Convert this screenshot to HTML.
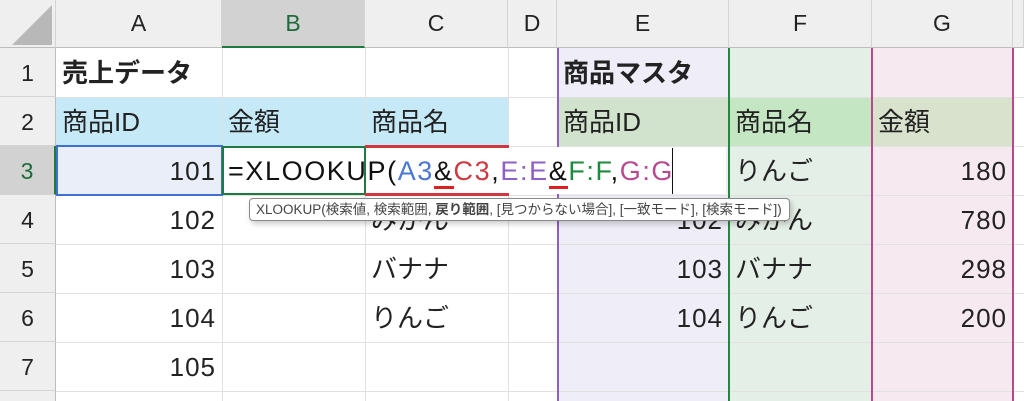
<!DOCTYPE html>
<html><head><meta charset="utf-8"><style>
html,body{margin:0;width:1024px;height:401px;overflow:hidden}
body{background:#fff;font-family:"Liberation Sans","Noto Sans CJK JP",sans-serif;position:relative}
div{position:absolute;box-sizing:border-box}
.h{background:#efefef;color:#222;font-size:23px;text-align:center;line-height:46px;top:0;height:48px;border-right:1px solid #d4d4d4;border-bottom:1px solid #bdbdbd}
.r{background:#efefef;color:#222;font-size:23px;text-align:center;left:0;width:56px;height:49px;line-height:50px;border-bottom:1px solid #d4d4d4;border-right:1px solid #bdbdbd}
.c{font-size:26px;line-height:50px;color:#222;white-space:nowrap;padding:0 6px}
.n{text-align:right;letter-spacing:1px}
.vl{top:48px;height:353px;width:1px;background:#e1e1e1}
.hl{left:56px;width:968px;height:1px;background:#e1e1e1}
</style></head><body>
<div style="left:557px;top:48px;width:172px;height:353px;background:#efedf7"></div>
<div style="left:729px;top:48px;width:143px;height:353px;background:#e4efe7"></div>
<div style="left:872px;top:48px;width:141px;height:353px;background:#f6e9ef"></div>
<div style="left:56px;top:97px;width:452px;height:49px;background:#c6e9f8"></div>
<div style="left:557px;top:97px;width:172px;height:49px;background:#d2e3cd"></div>
<div style="left:729px;top:97px;width:143px;height:49px;background:#c5e6c2"></div>
<div style="left:872px;top:97px;width:141px;height:49px;background:#d9e2cc"></div>
<div style="left:56px;top:146px;width:166px;height:49px;background:#e9eef8"></div>
<div class="vl" style="left:222px"></div><div class="vl" style="left:365px"></div><div class="vl" style="left:508px"></div>
<div class="hl" style="top:97px"></div><div class="hl" style="top:146px"></div><div class="hl" style="top:195px"></div><div class="hl" style="top:244px"></div><div class="hl" style="top:293px"></div><div class="hl" style="top:342px"></div><div class="hl" style="top:391px"></div>
<div class="h" style="left:0;width:56px"><div style="left:12px;top:5px;width:0;height:0;border-left:40px solid transparent;border-bottom:40px solid #b8b8b8"></div></div>
<div class="h" style="left:56px;width:166px">A</div>
<div class="h" style="left:222px;width:143px;background:#d2d2d2;color:#1e6b3a;border-bottom:2px solid #1e7a3e">B</div>
<div class="h" style="left:365px;width:143px">C</div>
<div class="h" style="left:508px;width:49px">D</div>
<div class="h" style="left:557px;width:172px">E</div>
<div class="h" style="left:729px;width:143px">F</div>
<div class="h" style="left:872px;width:141px">G</div>
<div class="h" style="left:1013px;width:11px"></div>
<div class="r" style="top:48px">1</div><div class="r" style="top:97px">2</div>
<div class="r" style="top:146px;background:#d2d2d2;color:#1e6b3a;border-right:2px solid #1e7a3e">3</div>
<div class="r" style="top:195px">4</div><div class="r" style="top:244px">5</div><div class="r" style="top:293px">6</div><div class="r" style="top:342px">7</div><div class="r" style="top:391px;height:10px;border-bottom:none"></div>
<div style="left:557px;top:48px;width:2px;height:353px;background:#8e5fc4"></div>
<div style="left:728px;top:48px;width:2px;height:353px;background:#1e8a3e"></div>
<div style="left:871px;top:48px;width:2px;height:353px;background:#b9488f"></div>
<div style="left:1012px;top:48px;width:2px;height:353px;background:#b9488f"></div>
<div class="c" style="left:56px;top:48px;font-weight:bold">売上データ</div>
<div class="c" style="left:557px;top:48px;font-weight:bold">商品マスタ</div>
<div class="c" style="left:56px;top:97px">商品ID</div>
<div class="c" style="left:222px;top:97px">金額</div>
<div class="c" style="left:365px;top:97px">商品名</div>
<div class="c" style="left:557px;top:97px">商品ID</div>
<div class="c" style="left:729px;top:97px">商品名</div>
<div class="c" style="left:872px;top:97px">金額</div>
<div class="c n" style="left:56px;top:146px;width:166px">101</div>
<div class="c n" style="left:56px;top:195px;width:166px">102</div>
<div class="c n" style="left:56px;top:244px;width:166px">103</div>
<div class="c n" style="left:56px;top:293px;width:166px">104</div>
<div class="c n" style="left:56px;top:342px;width:166px">105</div>
<div class="c" style="left:365px;top:195px">みかん</div>
<div class="c" style="left:365px;top:244px">バナナ</div>
<div class="c" style="left:365px;top:293px">りんご</div>
<div class="c n" style="left:557px;top:195px;width:172px">102</div>
<div class="c n" style="left:557px;top:244px;width:172px">103</div>
<div class="c n" style="left:557px;top:293px;width:172px">104</div>
<div class="c" style="left:729px;top:146px">りんご</div>
<div class="c" style="left:729px;top:195px">みかん</div>
<div class="c" style="left:729px;top:244px">バナナ</div>
<div class="c" style="left:729px;top:293px">りんご</div>
<div class="c n" style="left:872px;top:146px;width:141px">180</div>
<div class="c n" style="left:872px;top:195px;width:141px">780</div>
<div class="c n" style="left:872px;top:244px;width:141px">298</div>
<div class="c n" style="left:872px;top:293px;width:141px">200</div>
<div style="left:56px;top:145px;width:167px;height:51px;border:2px solid #3f6fd0"></div>
<div style="left:365px;top:145px;width:144px;height:51px;border:2px solid #d0383f"></div>
<div style="left:223px;top:147px;width:503px;height:47px;background:#fff"></div>
<div style="left:222px;top:146px;width:144px;height:49px;border:2px solid #1e7a3e"></div>
<div style="left:365px;top:146px;width:144px;height:2px;background:#d0383f"></div>
<div style="left:365px;top:193px;width:144px;height:2px;background:#d0383f"></div>
<div class="c" style="left:224px;top:146px;padding:0 4px;color:#111;font-size:27px;letter-spacing:1.6px">=XLOOKUP(<span style="color:#4a78d4">A3</span><span style="border-bottom:3px solid #e02020;line-height:30px;display:inline-block">&amp;</span><span style="color:#d0383f">C3</span>,<span style="color:#8e5fc4">E:E</span><span style="border-bottom:3px solid #e02020;line-height:30px;display:inline-block">&amp;</span><span style="color:#1e8a3e">F:F</span>,<span style="color:#b9488f">G:G</span></div>
<div style="left:672px;top:148px;width:1px;height:46px;background:#111"></div>
<div style="left:249px;top:198px;width:541px;height:23px;background:#fff;border:1px solid #8a8a8a;border-radius:4px;box-shadow:2px 3px 6px rgba(0,0,0,.2);font-size:13.5px;line-height:21px;color:#444;padding-left:6px;white-space:nowrap;overflow:hidden">XLOOKUP(検索値, 検索範囲, <b>戻り範囲</b>, [見つからない場合], [一致モード], [検索モード])</div>
</body></html>
